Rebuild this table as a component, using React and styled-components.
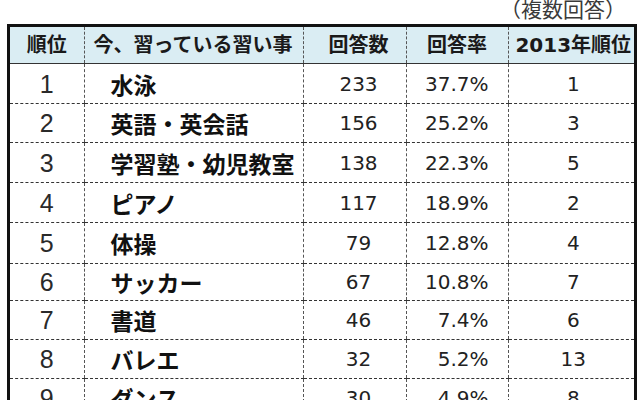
import React from "react";
import styled, { createGlobalStyle } from "styled-components";

const Global = createGlobalStyle`
  html, body { margin: 0; padding: 0; background: #ffffff; }
  body {
    width: 640px; height: 400px; overflow: hidden;
    font-family: "DejaVu Sans", "Noto Sans CJK JP", sans-serif;
    color: #1e1e1e;
  }
`;

const Page = styled.div`
  display: flex;
  flex-direction: column;
  width: 640px;
`;

const Note = styled.div`
  height: 24px;
  display: flex;
  align-items: flex-end;
  justify-content: flex-end;
  padding-right: 14px;
  font-family: "Noto Sans CJK JP", sans-serif;
  font-size: 21px;
  line-height: 21px;
  color: #3a3a3a;
  overflow: hidden;
  & > span { transform: translateY(-5px); }
`;

const Frame = styled.div`
  margin-left: 7px;
  width: 624px;
  border: 3px solid #111;
  border-bottom: none;
`;

const Table = styled.table`
  width: 624px;
  table-layout: fixed;
  border-collapse: collapse;
`;

const Head = styled.th`
  height: 36px;
  padding: 0;
  background: #daedf3;
  font-family: "DejaVu Sans", "Noto Sans CJK JP", sans-serif;
  font-weight: 700;
  font-size: 20px;
  line-height: 24px;
  text-align: ${(p) => (p.$left ? "left" : "center")};
  padding-left: ${(p) => (p.$left ? "9px" : p.$pl || "0")};
  white-space: nowrap;
  border-left: ${(p) => (p.$first ? "none" : "1px dashed #555")};
  border-bottom: 1px solid #333;
  color: #1a1a1a;
`;

const Cell = styled.td`
  padding: 0;
  font-size: 20px;
  line-height: 24px;
  white-space: nowrap;
  text-align: ${(p) => p.$align || "center"};
  padding-left: ${(p) => p.$pl || "0"};
  padding-right: ${(p) => p.$pr || "0"};
  border-left: 1px dashed #555;
  border-bottom: 1px dashed #333;
  color: #222;
`;

const Rank = styled(Cell)`
  font-family: "Liberation Sans", sans-serif;
  font-size: 25px;
  border-left: none;
  color: #2a2a2a;
`;

const Name = styled(Cell)`
  font-family: "Noto Sans CJK JP", sans-serif;
  font-weight: 700;
  font-size: 23px;
  text-align: left;
  padding-left: 26px;
  color: #111;
`;

const Row = styled.tr`
  height: ${(p) => p.$h}px;
`;

const rows = [
  ["1", "水泳", "233", "37.7%", "1", 40],
  ["2", "英語・英会話", "156", "25.2%", "3", 39],
  ["3", "学習塾・幼児教室", "138", "22.3%", "5", 40],
  ["4", "ピアノ", "117", "18.9%", "2", 40],
  ["5", "体操", "79", "12.8%", "4", 41],
  ["6", "サッカー", "67", "10.8%", "7", 37],
  ["7", "書道", "46", "7.4%", "6", 39],
  ["8", "バレエ", "32", "5.2%", "13", 39],
  ["9", "ダンス", "30", "4.9%", "8", 39],
];

export default function App() {
  return (
    <Page>
      <Global />
      <Note><span>（複数回答）</span></Note>
      <Frame>
        <Table>
          <colgroup>
            <col style={{ width: "74px" }} />
            <col style={{ width: "219px" }} />
            <col style={{ width: "103px" }} />
            <col style={{ width: "102px" }} />
            <col style={{ width: "126px" }} />
          </colgroup>
          <thead>
            <tr>
              <Head $first>順位</Head>
              <Head $left>今、習っている習い事</Head>
              <Head $pl="8px">回答数</Head>
              <Head>回答率</Head>
              <Head $pl="4px">2013年順位</Head>
            </tr>
          </thead>
          <tbody>
            {rows.map((r) => (
              <Row key={r[0]} $h={r[5]}>
                <Rank>{r[0]}</Rank>
                <Name>{r[1]}</Name>
                <Cell $pl="8px">{r[2]}</Cell>
                <Cell $align="right" $pr="19px">{r[3]}</Cell>
                <Cell $pl="4px">{r[4]}</Cell>
              </Row>
            ))}
          </tbody>
        </Table>
      </Frame>
    </Page>
  );
}
